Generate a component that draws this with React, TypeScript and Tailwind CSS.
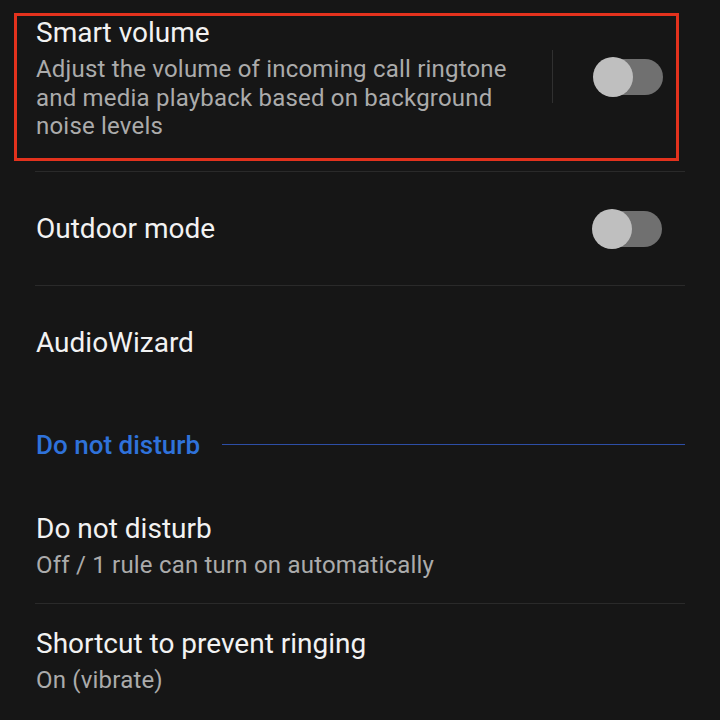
const font = { fontFamily: "Roboto, 'Noto Sans', sans-serif" };

function Toggle() {
  return (
    <div className="relative h-[40px] w-[70px] shrink-0">
      <div className="absolute left-[8px] top-[2px] h-[36px] w-[62px] rounded-full bg-[#707070]" />
      <div className="absolute left-0 top-0 h-[40px] w-[40px] rounded-full bg-[#bfbfbf]" />
    </div>
  );
}

function Divider() {
  return <div className="mx-[35px] h-px bg-[#2a2a2a]" />;
}

function Title({ children }: { children: string }) {
  return <div className="text-[28px] leading-[34px] text-[#f2f2f2]">{children}</div>;
}

function Sub({ children }: { children: string }) {
  return <div className="mt-[5px] text-[24px] leading-[28.5px] tracking-[0.2px] text-[#ababab]">{children}</div>;
}

export default function App() {
  return (
    <div className="h-[720px] w-[720px] overflow-hidden bg-[#161616] text-white" style={font}>
      <div className="pt-[13px]">
        <div className="ml-[14px] flex h-[148px] w-[665px] items-start border-[3px] border-[#e3321d] pl-[19px]">
          <div className="w-[490px]">
            <Title>Smart volume</Title>
            <Sub>Adjust the volume of incoming call ringtone and media playback based on background noise levels</Sub>
          </div>
          <div className="ml-[26px] mt-[34px] h-[53px] w-px bg-[#303030]" />
          <div className="ml-[40px] mt-[41px]">
            <Toggle />
          </div>
        </div>
      </div>
      <div className="mt-[10px]">
        <Divider />
      </div>
      <div className="flex h-[113px] items-center justify-between pl-[36px] pr-[58px]">
        <Title>Outdoor mode</Title>
        <Toggle />
      </div>
      <Divider />
      <div className="flex h-[114px] items-center pl-[36px]">
        <Title>AudioWizard</Title>
      </div>
      <div className="flex items-start pl-[36px] pr-[35px] pt-[28px]">
        <div className="text-[26px] font-medium leading-[34px] text-[#2f72da]">Do not disturb</div>
        <div className="ml-[22px] mt-[16px] h-px flex-1 bg-[#2d4ea6]" />
      </div>
      <div className="pl-[36px] pt-[50px] pb-[23px]">
        <Title>Do not disturb</Title>
        <Sub>Off / 1 rule can turn on automatically</Sub>
      </div>
      <Divider />
      <div className="pl-[36px] pt-[23px]">
        <Title>Shortcut to prevent ringing</Title>
        <Sub>On (vibrate)</Sub>
      </div>
    </div>
  );
}
